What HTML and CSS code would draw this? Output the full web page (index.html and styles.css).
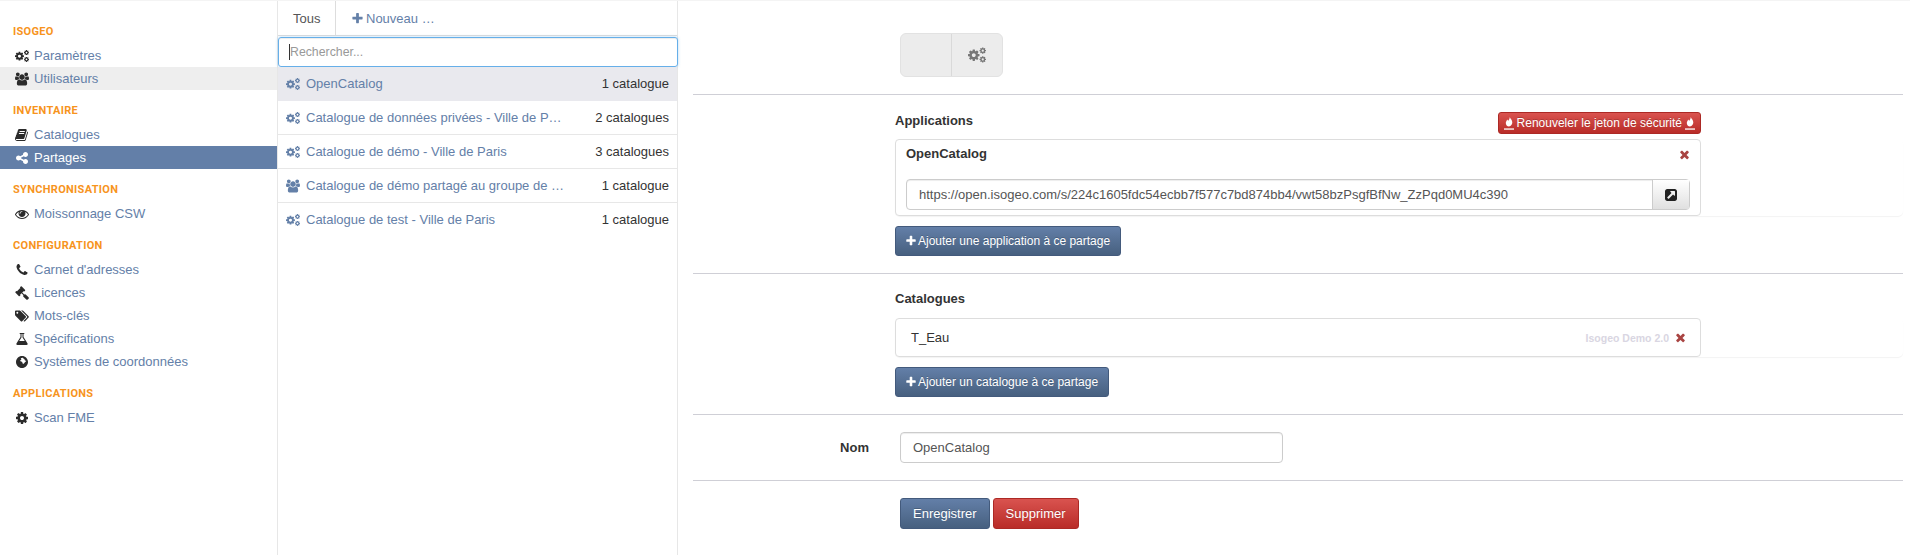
FILE: index.html
```html
<!DOCTYPE html>
<html lang="fr">
<head>
  <meta charset="UTF-8">
  <title>Partages</title>
  <link rel="stylesheet" href="styles.css">
</head>
<body>
  <svg class="sprite" xmlns="http://www.w3.org/2000/svg">
    <symbol id="i-cog" viewBox="0 0 1792 1792"><path d="M1152 896q0-106-75-181t-181-75-181 75-75 181 75 181 181 75 181-75 75-181zm512-109v222q0 12-8 23t-20 13l-185 28q-19 54-39 91 35 50 107 138 10 12 10 25t-9 23q-27 37-99 108t-94 71q-12 0-26-9l-138-108q-44 23-91 38-16 136-29 186-7 28-36 28h-222q-14 0-24.5-8.5t-11.5-21.5l-28-184q-49-16-90-37l-141 107q-10 9-25 9-14 0-25-11-126-114-165-168-7-10-7-23 0-12 8-23 15-21 51-66.5t54-70.5q-27-50-41-99l-183-27q-13-2-21-12.5t-8-23.5v-222q0-12 8-23t19-13l186-28q14-46 39-92-40-57-107-138-10-12-10-24 0-10 9-23 26-36 98.5-107.5t94.5-71.5q13 0 26 10l138 107q44-23 91-38 16-136 29-186 7-28 36-28h222q14 0 24.5 8.5t11.5 21.5l28 184q49 16 90 37l142-107q9-9 24-9 13 0 25 10 129 119 165 170 7 8 7 22 0 12-8 23-15 21-51 66.5t-54 70.5q26 50 41 98l183 28q13 2 21 12.5t8 23.5z"/></symbol>
    <symbol id="i-cogs" viewBox="60 180 1750 1480">
      <use href="#i-cog" x="-30" y="290" width="1300" height="1300"/>
      <use href="#i-cog" x="1130" y="130" width="730" height="730"/>
      <use href="#i-cog" x="1130" y="980" width="730" height="730"/>
    </symbol>
    <symbol id="i-users" viewBox="0 0 1920 1792"><path d="M593 896q-162 5-265 128h-134q-82 0-138-40.5t-56-118.5q0-353 124-353 6 0 43.5 21t97.5 42.5 119 21.5q67 0 133-23-5 37-5 66 0 139 81 256zm1071 637q0 120-73 189.5t-194 69.5h-874q-121 0-194-69.5t-73-189.5q0-53 3.5-103.5t14-109 26.5-108.5 43-97.5 62-81 85.5-53.5 111.5-20q10 0 43 21.5t73 48 107 48 135 21.5 135-21.5 107-48 73-48 43-21.5q61 0 111.5 20t85.5 53.5 62 81 43 97.5 26.5 108.5 14 109 3.5 103.5zm-1024-1277q0 106-75 181t-181 75-181-75-75-181 75-181 181-75 181 75 75 181zm704 384q0 159-112.5 271.5t-271.5 112.5-271.5-112.5-112.5-271.5 112.5-271.5 271.5-112.5 271.5 112.5 112.5 271.5zm576 225q0 78-56 118.5t-138 40.5h-134q-103-123-265-128 81-117 81-256 0-29-5-66 66 23 133 23 59 0 119-21.5t97.5-42.5 43.5-21q124 0 124 353zm-128-609q0 106-75 181t-181 75-181-75-75-181 75-181 181-75 181 75 75 181z"/></symbol>
    <symbol id="i-book" viewBox="0 0 1792 1792"><path d="M1639 478q40 57 18 129l-275 906q-19 64-76.5 107.5t-122.5 43.5h-923q-77 0-148.5-53.5t-99.5-131.5q-24-67-2-127 0-4 3-27t4-37q1-8-3-21.5t-3-19.5q2-11 8-21t16.5-23.5 16.5-23.5q23-38 45-91.5t30-91.5q3-10 .5-30t-.5-28q3-11 17-28t17-23q21-36 42-92t25-90q1-9-2.5-32t.5-28q4-13 22-30.5t22-22.5q19-26 42.5-84.5t27.5-96.5q1-8-3-25.5t-2-26.5q2-8 9-18t18-23 17-21q8-12 16.5-30.5t15-35 16-36 19.5-32 26.5-23.5 36-11.5 47.5 5.5l-1 3q38-9 51-9h761q74 0 114 56t18 130l-274 906q-36 119-71.5 153.5t-128.5 34.5h-869q-27 0-38 15-11 16-1 43 24 70 144 70h923q29 0 56-15.5t35-41.5l300-987q7-22 5-57 38 15 59 43zm-1064 2q-4 13 2 22.5t20 9.5h608q13 0 25.5-9.5t16.5-22.5l21-64q4-13-2-22.5t-20-9.5h-608q-13 0-25.5 9.5t-16.5 22.5zm-83 256q-4 13 2 22.5t20 9.5h608q13 0 25.5-9.5t16.5-22.5l21-64q4-13-2-22.5t-20-9.5h-608q-13 0-25.5 9.5t-16.5 22.5z"/></symbol>
    <symbol id="i-share" viewBox="0 0 1792 1792"><path d="M1344 1024q133 0 226.5 93.5t93.5 226.5-93.5 226.5-226.5 93.5-226.5-93.5-93.5-226.5q0-12 2-34l-360-180q-92 86-218 86-133 0-226.5-93.5t-93.5-226.5 93.5-226.5 226.5-93.5q126 0 218 86l360-180q-2-22-2-34 0-133 93.5-226.5t226.5-93.5 226.5 93.5 93.5 226.5-93.5 226.5-226.5 93.5q-126 0-218-86l-360 180q2 22 2 34t-2 34l360 180q92-86 218-86z"/></symbol>
    <symbol id="i-eye" viewBox="0 0 1792 1792"><path d="M1664 960q-152-236-381-353 61 104 61 225 0 185-131.5 316.5t-316.5 131.5-316.5-131.5-131.5-316.5q0-121 61-225-229 117-381 353 133 205 333.5 326.5t434.5 121.5 434.5-121.5 333.5-326.5zm-720-384q0-20-14-34t-34-14q-125 0-214.5 89.5t-89.5 214.5q0 20 14 34t34 14 34-14 14-34q0-86 61-147t147-61q20 0 34-14t14-34zm848 384q0 34-20 69-140 230-376.5 368.5t-499.5 138.5-499.5-139-376.5-368q-20-35-20-69t20-69q140-229 376.5-368t499.5-139 499.5 139 376.5 368q20 35 20 69z"/></symbol>
    <symbol id="i-phone" viewBox="0 0 1792 1792"><path d="M1600 1240q0 27-10 70.5t-21 68.5q-21 50-122 106-94 51-186 51-27 0-53-3.5t-57.5-12.5-47-14.5-55.5-20.5-49-18q-98-35-175-83-127-79-264-216t-216-264q-48-77-83-175-3-9-18-49t-20.5-55.5-14.5-47-12.5-57.5-3.5-53q0-92 51-186 56-101 106-122 25-11 68.5-21t70.5-10q14 0 21 3 18 6 53 76 11 19 30 54t35 63.5 31 53.5q3 4 17.5 25t21.5 35.5 7 28.5q0 20-28.5 50t-62 55-62 53-28.5 46q0 9 5 22.5t8.5 20.5 14 24 11.5 19q76 137 174 235t235 174q2 1 19 11.5t24 14 20.5 8.5 22.5 5q18 0 46-28.5t53-62 55-62 50-28.5q14 0 28.5 7t35.5 21.5 25 17.5q25 15 53.5 31t63.5 35 54 30q70 35 76 53 3 7 3 21z"/></symbol>
    <symbol id="i-gavel" viewBox="0 0 1792 1792"><path d="M1771 1536q0 53-37 90l-107 108q-39 37-91 37-53 0-90-37l-363-364q-38-36-38-90 0-53 43-96l-256-256-126 126q-14 14-34 14t-34-14q2 2 12.5 12t12.5 13 10 11.5 10 13.5 6 13.5 5.5 16.5 1.5 18q0 38-28 68-3 3-16.5 18t-19 20.5-18.5 16.5-22 15.5-22 9-26 4.5q-40 0-68-28l-408-408q-28-28-28-68 0-13 4.5-26t9-22 15.5-22 16.5-18.5 20.5-19 18-16.5q30-28 68-28 10 0 18 1.5t16.5 5.5 13.5 6 13.5 10 11.5 10 13 12.5 12 12.5q-14-14-14-34t14-34l348-348q14-14 34-14t34 14q-2-2-12.5-12t-12.5-13-10-11.5-10-13.5-6-13.5-5.5-16.5-1.5-18q0-38 28-68 3-3 16.5-18t19-20.5 18.5-16.5 22-15.5 22-9 26-4.5q40 0 68 28l408 408q28 28 28 68 0 13-4.5 26t-9 22-15.5 22-16.5 18.5-20.5 19-18 16.5q-30 28-68 28-10 0-18-1.5t-16.5-5.5-13.5-6-13.5-10-11.5-10-13-12.5-12-12.5q14 14 14 34t-14 34l-126 126 256 256q43-43 96-43 52 0 91 37l363 363q37 39 37 91z"/></symbol>
    <symbol id="i-tags" viewBox="0 0 1920 1792"><path d="M448 448q0-53-37.5-90.5t-90.5-37.5-90.5 37.5-37.5 90.5 37.5 90.5 90.5 37.5 90.5-37.5 37.5-90.5zm1067 576q0 53-37 90l-491 492q-39 37-91 37-53 0-90-37l-715-716q-38-37-64.5-101t-26.5-117v-416q0-52 38-90t90-38h416q53 0 117 26.5t102 64.5l715 714q37 39 37 91zm384 0q0 53-37 90l-491 492q-39 37-91 37-36 0-59-14t-53-45l470-470q37-37 37-90 0-52-37-91l-715-714q-38-38-102-64.5t-117-26.5h224q53 0 117 26.5t102 64.5l715 714q37 39 37 91z"/></symbol>
    <symbol id="i-flask" viewBox="0 0 1792 1792"><path d="M1591 1448q56 89 21.5 152.5t-140.5 63.5h-1152q-106 0-140.5-63.5t21.5-152.5l503-793v-399h-64q-26 0-45-19t-19-45 19-45 45-19h512q26 0 45 19t19 45-19 45-45 19h-64v399zm-779-725l-272 429h712l-272-429-20-31v-436h-128v436z"/></symbol>
    <symbol id="i-globe" viewBox="0 0 1792 1792"><path fill-rule="evenodd" d="M896 128c424 0 768 344 768 768s-344 768-768 768-768-344-768-768 344-768 768-768zm40 230c-90 30-150 20-190 90-20 60 60 70 70 130 10 70-120 60-150 130-20 60 40 110 110 130 80 20 130 60 170 130 30 70 10 130 60 160 70 30 150-40 190-120 40-70 100-100 150-150 40-50 110-70 90-120-60-10-110 10-160-20-40-40-20-120-70-170-70-60-130-70-150-130-30-40-60-60-120-60z"/></symbol>
    <symbol id="i-plus" viewBox="0 0 1792 1792"><path d="M1600 736v192q0 40-28 68t-68 28h-416v416q0 40-28 68t-68 28h-192q-40 0-68-28t-28-68v-416h-416q-40 0-68-28t-28-68v-192q0-40 28-68t68-28h416v-416q0-40 28-68t68-28h192q40 0 68 28t28 68v416h416q40 0 68 28t28 68z"/></symbol>
    <symbol id="i-times" viewBox="0 0 1792 1792"><path d="M1490 1322q0 40-28 68l-136 136q-28 28-68 28t-68-28l-294-294-294 294q-28 28-68 28t-68-28l-136-136q-28-28-28-68t28-68l294-294-294-294q-28-28-28-68t28-68l136-136q28-28 68-28t68 28l294 294 294-294q28-28 68-28t68 28l136 136q28 28 28 68t-28 68l-294 294 294 294q28 28 28 68z"/></symbol>
    <symbol id="i-link" viewBox="0 0 1792 1792"><path d="M1408 928v-480q0-26-19-45t-45-19h-480q-42 0-59 39-17 41 14 70l144 144-534 534q-19 19-19 45t19 45l102 102q19 19 45 19t45-19l534-534 144 144q18 19 45 19 12 0 25-5 39-17 39-59zm256-512v960q0 119-84.5 203.5t-203.5 84.5h-960q-119 0-203.5-84.5t-84.5-203.5v-960q0-119 84.5-203.5t203.5-84.5h960q119 0 203.5 84.5t84.5 203.5z"/></symbol>
    <symbol id="i-fire" viewBox="0 0 10 13"><path d="M5.800 0c.3 1.600 2.500 2.900 2.500 5.300 0 1.900-1.300 4.200-3.300 4.200S1.800 7.800 1.800 5.900c0-1.500 1-2.300 1.500-3.500.3.700.6 1.100 1 1.400C5 2.700 5.800 1.200 5.800 0z"/><rect y="11.400" width="10" height="1.300"/></symbol>
  </svg>

  <div class="layout">
    <!-- Main menu -->
    <nav class="sidebar">
      <h4 class="menu-title">Isogeo</h4>
      <a class="menu-item"><svg class="icon"><use href="#i-cogs"/></svg>Paramètres</a>
      <a class="menu-item hover"><svg class="icon"><use href="#i-users"/></svg>Utilisateurs</a>

      <h4 class="menu-title">Inventaire</h4>
      <a class="menu-item"><svg class="icon"><use href="#i-book"/></svg>Catalogues</a>
      <a class="menu-item active"><svg class="icon"><use href="#i-share"/></svg>Partages</a>

      <h4 class="menu-title">Synchronisation</h4>
      <a class="menu-item"><svg class="icon"><use href="#i-eye"/></svg>Moissonnage CSW</a>

      <h4 class="menu-title">Configuration</h4>
      <a class="menu-item"><svg class="icon"><use href="#i-phone"/></svg>Carnet d'adresses</a>
      <a class="menu-item"><svg class="icon"><use href="#i-gavel"/></svg>Licences</a>
      <a class="menu-item"><svg class="icon"><use href="#i-tags"/></svg>Mots-clés</a>
      <a class="menu-item"><svg class="icon"><use href="#i-flask"/></svg>Spécifications</a>
      <a class="menu-item"><svg class="icon"><use href="#i-globe"/></svg>Systèmes de coordonnées</a>

      <h4 class="menu-title">Applications</h4>
      <a class="menu-item"><svg class="icon"><use href="#i-cog"/></svg>Scan FME</a>
    </nav>

    <!-- Shares list -->
    <section class="shares">
      <div class="tabs">
        <a class="tab current">Tous</a>
        <a class="tab"><svg class="icon-plus"><use href="#i-plus"/></svg>Nouveau …</a>
      </div>
      <div class="search"><span class="caret"></span><span class="placeholder">Rechercher...</span></div>
      <ul class="share-list">
        <li class="share selected"><svg class="icon"><use href="#i-cogs"/></svg><span class="share-name">OpenCatalog</span><span class="share-count">1 catalogue</span></li>
        <li class="share"><svg class="icon"><use href="#i-cogs"/></svg><span class="share-name">Catalogue de données privées - Ville de P…</span><span class="share-count">2 catalogues</span></li>
        <li class="share"><svg class="icon"><use href="#i-cogs"/></svg><span class="share-name">Catalogue de démo - Ville de Paris</span><span class="share-count">3 catalogues</span></li>
        <li class="share"><svg class="icon"><use href="#i-users"/></svg><span class="share-name">Catalogue de démo partagé au groupe de …</span><span class="share-count">1 catalogue</span></li>
        <li class="share"><svg class="icon"><use href="#i-cogs"/></svg><span class="share-name">Catalogue de test - Ville de Paris</span><span class="share-count">1 catalogue</span></li>
      </ul>
    </section>

    <!-- Share form -->
    <main class="detail">
      <div class="row row-type">
        <div class="switch">
          <span class="switch-btn"></span>
          <span class="switch-btn"><svg class="icon-switch"><use href="#i-cogs"/></svg></span>
        </div>
      </div>

      <div class="row row-apps">
        <div class="block-head">
          <h5 class="block-title">Applications</h5>
          <button class="btn btn-red btn-small"><svg class="icon-fire"><use href="#i-fire"/></svg>Renouveler le jeton de sécurité<svg class="icon-fire"><use href="#i-fire"/></svg></button>
        </div>
        <div class="panel-back">
          <div class="card card-app">
            <div class="card-head"><strong>OpenCatalog</strong><svg class="icon-times"><use href="#i-times"/></svg></div>
            <div class="url-group">
              <span class="url">https://open.isogeo.com/s/224c1605fdc54ecbb7f577c7bd874bb4/vwt58bzPsgfBfNw_ZzPqd0MU4c390</span>
              <span class="url-btn"><svg class="icon-link"><use href="#i-link"/></svg></span>
            </div>
          </div>
        </div>
        <button class="btn btn-blue btn-add"><svg class="icon-plus"><use href="#i-plus"/></svg>Ajouter une application à ce partage</button>
      </div>

      <div class="row row-cats">
        <h5 class="block-title">Catalogues</h5>
        <div class="panel-back">
          <div class="card card-cat">
            <span>T_Eau</span>
            <span class="card-right"><span class="owner">Isogeo Demo 2.0</span><svg class="icon-times"><use href="#i-times"/></svg></span>
          </div>
        </div>
        <button class="btn btn-blue btn-add"><svg class="icon-plus"><use href="#i-plus"/></svg>Ajouter un catalogue à ce partage</button>
      </div>

      <div class="row row-name">
        <label class="field-label">Nom</label>
        <div class="field">OpenCatalog</div>
      </div>

      <div class="row-actions">
        <button class="btn btn-blue btn-big">Enregistrer</button>
        <button class="btn btn-red btn-big">Supprimer</button>
      </div>
    </main>
  </div>
</body>
</html>
```

FILE: styles.css
```css
* {
  box-sizing: border-box;
}

body {
  margin: 0;
  height: 555px;
  overflow: hidden;
  font-family: "Liberation Sans", Arial, sans-serif;
  font-size: 13px;
  color: #333;
  background-color: #fff;
}

.sprite {
  display: none;
}

.layout {
  display: flex;
  height: 555px;
  border-top: 1px solid #f4f4f4;
}

/* Main menu */
.sidebar {
  width: 278px;
  flex: none;
  padding-top: 24px;
  border-right: 1px solid #e7e7e7;
}

.menu-title {
  margin: 0;
  height: 14px;
  padding-left: 13px;
  font-family: Roboto, sans-serif;
  font-size: 11px;
  line-height: 14px;
  font-weight: 700;
  letter-spacing: .3px;
  text-transform: uppercase;
  color: #f7941d;
}

.menu-item + .menu-title {
  margin-top: 14px;
}

.menu-title + .menu-item {
  margin-top: 5px;
}

.menu-item {
  display: flex;
  align-items: center;
  height: 23px;
  padding-left: 15px;
  font-size: 13px;
  color: #6480a8;
}

.menu-item .icon {
  margin-right: 5px;
  color: #2b2b2b;
}

.menu-item.hover {
  background-color: #eee;
}

.menu-item.active {
  background-color: #637fa8;
  color: #fff;
}

.menu-item.active .icon {
  color: #fff;
}

.icon {
  flex: none;
  width: 14px;
  height: 14px;
  fill: currentColor;
}

/* Shares list */
.shares {
  width: 400px;
  flex: none;
  border-right: 1px solid #e7e7e7;
}

.tabs {
  display: flex;
  height: 35px;
  border-bottom: 1px solid #ddd;
}

.tab {
  display: flex;
  align-items: center;
  padding: 0 15px;
  font-size: 13px;
  color: #6480a8;
}

.tab.current {
  width: 58px;
  background-color: #fff;
  color: #555;
  border-right: 1px solid #ddd;
}

.tab .icon-plus {
  width: 13px;
  height: 13px;
  margin-right: 2px;
  fill: #6480a8;
}

.search {
  display: flex;
  align-items: center;
  height: 30px;
  margin-top: 1px;
  margin-right: -1px;
  padding-left: 10px;
  border: 1px solid #66afe9;
  border-radius: 3px;
  box-shadow: inset 0 1px 1px rgba(0, 0, 0, .075), 0 0 3px rgba(102, 175, 233, .5);
  font-size: 12.3px;
  color: #999;
}

.caret {
  width: 1px;
  height: 16px;
  background-color: #333;
}

.share-list {
  margin: 0;
  padding: 0;
  list-style: none;
}

.share {
  display: flex;
  align-items: center;
  height: 34px;
  padding: 0 8px;
  border-bottom: 1px solid #e7e7e7;
  font-size: 13px;
  color: #6480a8;
}

.share.selected {
  background-color: #e9e9ee;
  border-bottom-color: #e9e9ee;
}

.share:last-child {
  border-bottom-color: transparent;
}

.share .icon {
  margin-right: 6px;
  color: #6480a8;
}

.share-name {
  white-space: nowrap;
}

.share-count {
  margin-left: auto;
  color: #333;
}

/* Share form */
.detail {
  flex: 1;
  min-width: 0;
  padding: 0 7px 0 15px;
}

.row {
  padding-left: 202px;
  border-bottom: 1px solid #cfcfd6;
}

.row-type {
  height: 94px;
  padding-top: 32px;
  padding-left: 207px;
}

.switch {
  display: flex;
  width: 103px;
  height: 44px;
  border: 1px solid #e2e2e2;
  border-radius: 6px;
  background-color: #ececec;
}

.switch-btn {
  display: flex;
  align-items: center;
  justify-content: center;
  flex: 1;
}

.switch-btn:first-child {
  border-right: 1px solid #d9d9d9;
}

.icon-switch {
  width: 18px;
  height: 16px;
  fill: #777;
}

.block-head {
  display: flex;
  align-items: flex-start;
  justify-content: space-between;
  width: 806px;
}

.block-title {
  margin: 0;
  font-size: 13px;
  line-height: 16px;
  font-weight: 700;
  color: #333;
}

.block-head .block-title {
  margin-top: 1px;
}

.btn {
  display: inline-flex;
  align-items: center;
  justify-content: center;
  border-radius: 3px;
  font-family: inherit;
  color: #fff;
  cursor: pointer;
  text-shadow: 0 -1px 0 rgba(0, 0, 0, .2);
}

.btn-blue {
  border: 1px solid #435a7c;
  background: linear-gradient(#637fa8, #47607f);
}

.btn-red {
  border: 1px solid #ac2925;
  background: linear-gradient(#d9534f, #b92c28);
}

.btn-small {
  height: 22px;
  padding: 0 5px;
  font-size: 12px;
}

.icon-fire {
  width: 10px;
  height: 13px;
  margin-right: 3px;
  fill: #fff;
}

.icon-fire:last-child {
  margin: 0 0 0 3px;
}

.btn-add {
  height: 30px;
  padding: 0 10px 0 9px;
  font-size: 12px;
}

.btn-add .icon-plus {
  width: 12px;
  height: 12px;
  margin-right: 1px;
  fill: #fff;
}

.panel-back {
  border-radius: 5px;
  box-shadow: 0 1px 1px rgba(0, 0, 0, .05);
}

.card {
  width: 806px;
  border: 1px solid #ddd;
  border-radius: 4px;
  background-color: #fff;
}

.card strong {
  line-height: 16px;
  color: #333;
}

.card-head {
  display: flex;
  align-items: flex-start;
  justify-content: space-between;
  height: 39px;
  padding: 6px 10px 0;
}

.card-head .icon-times {
  margin-top: 2px;
  margin-right: -1px;
}

.icon-times {
  width: 13px;
  height: 13px;
  fill: #a94442;
}

.url-group {
  display: flex;
  height: 31px;
  margin: 0 10px 5px;
  border: 1px solid #ccc;
  border-radius: 4px;
  box-shadow: inset 0 1px 1px rgba(0, 0, 0, .075);
}

.url {
  flex: 1;
  padding: 0 12px;
  font-size: 13px;
  line-height: 29px;
  color: #555;
  white-space: nowrap;
}

.url-btn {
  display: flex;
  align-items: center;
  justify-content: center;
  width: 37px;
  border-left: 1px solid #ccc;
  background: linear-gradient(#fff, #e0e0e0);
}

.icon-link {
  width: 14px;
  height: 14px;
  fill: #222;
}

.row-apps {
  height: 179px;
  padding-top: 17px;
}

.row-apps .panel-back {
  margin-top: 5px;
}

.row-apps .btn-add,
.row-cats .btn-add {
  margin-top: 10px;
}

.row-cats {
  height: 141px;
  padding-top: 17px;
}

.row-cats .panel-back {
  margin-top: 11px;
}

.card-cat {
  display: flex;
  align-items: center;
  justify-content: space-between;
  height: 39px;
  padding: 0 13px 0 15px;
  font-size: 13px;
}

.card-right {
  display: flex;
  align-items: center;
}

.owner {
  margin-right: 5px;
  font-size: 10.5px;
  font-weight: 700;
  color: #d9d6e2;
}

.row-name {
  display: flex;
  align-items: center;
  height: 66px;
  padding-left: 0;
}

.field-label {
  width: 176px;
  text-align: right;
  font-size: 13px;
  font-weight: 700;
}

.field {
  width: 383px;
  height: 31px;
  margin-left: 31px;
  padding: 0 12px;
  border: 1px solid #ccc;
  border-radius: 4px;
  box-shadow: inset 0 1px 1px rgba(0, 0, 0, .075);
  font-size: 13px;
  line-height: 29px;
  color: #555;
}

.row-actions {
  display: flex;
  gap: 3px;
  padding: 17px 0 0 207px;
}

.btn-big {
  height: 31px;
  padding: 0 12px;
  font-size: 13px;
}
```
